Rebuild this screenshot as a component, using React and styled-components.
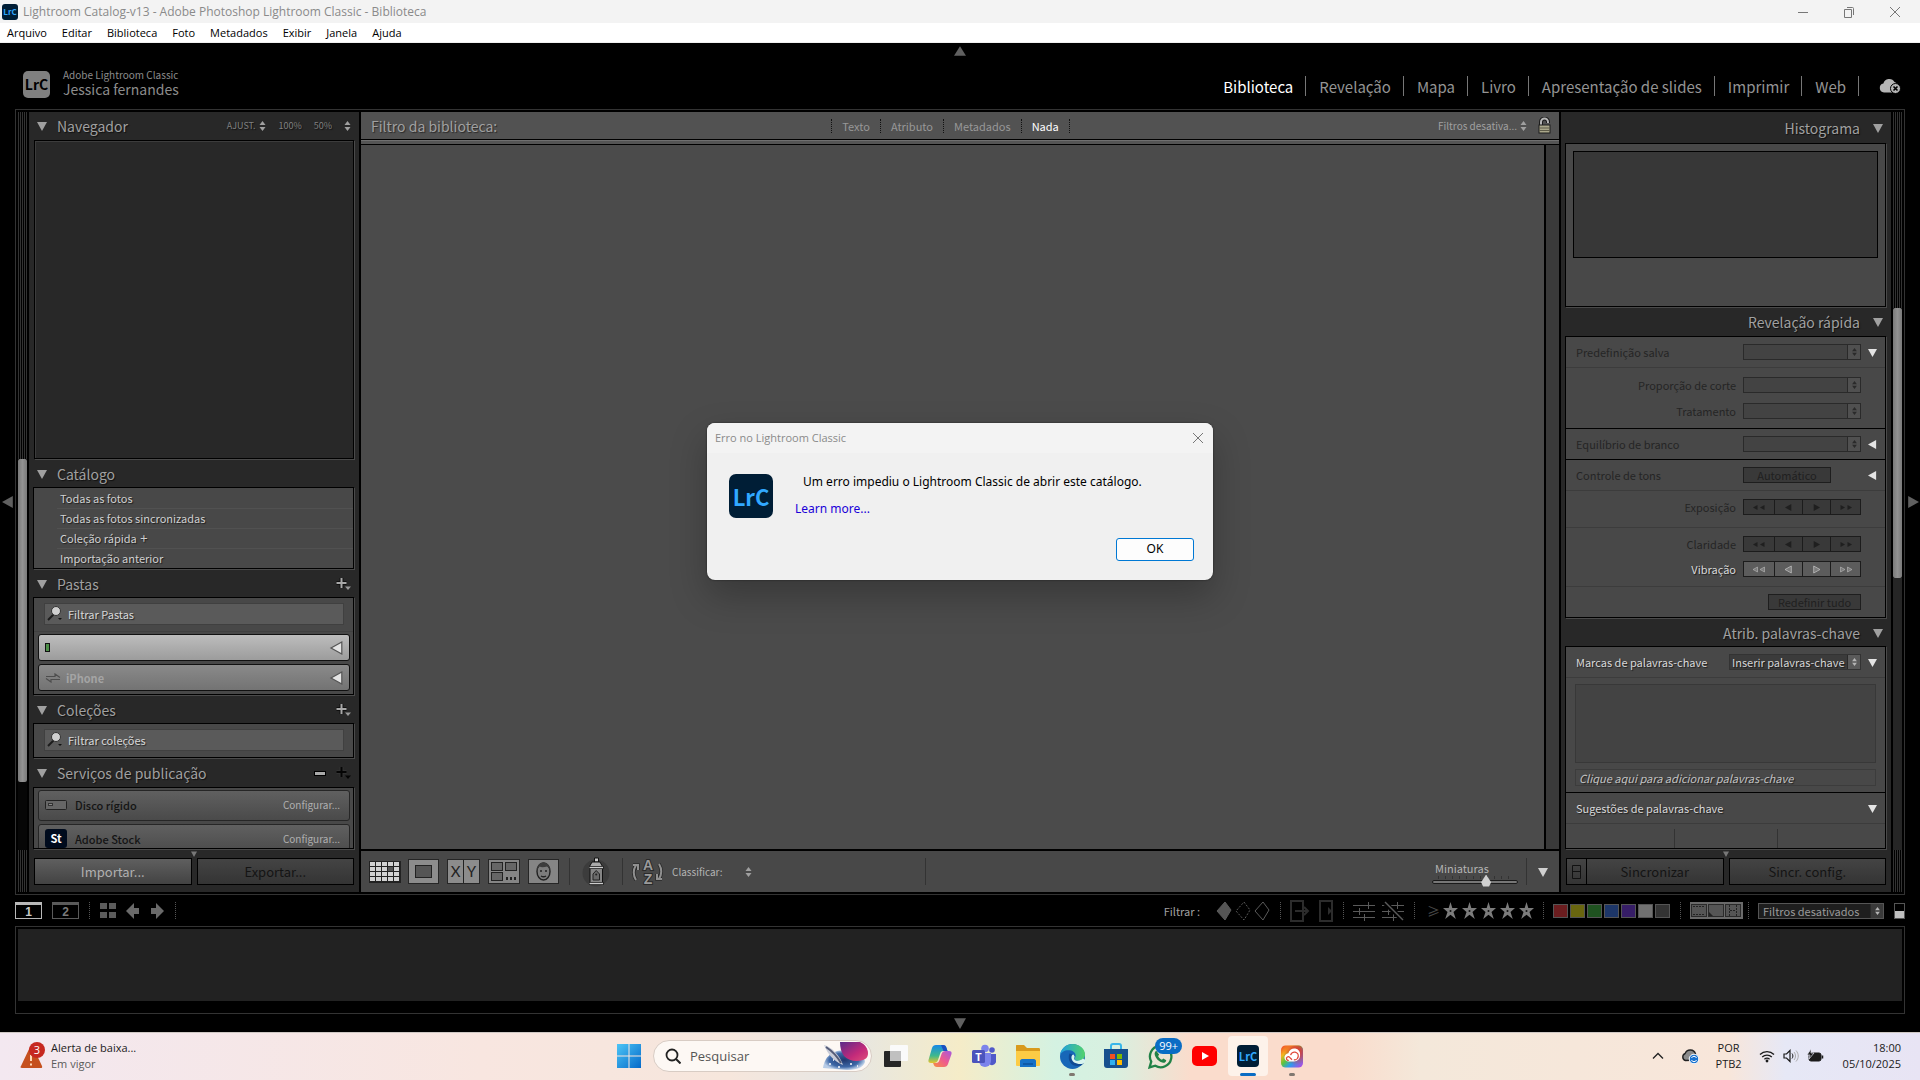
import React, { useId } from "react";
import styled, { createGlobalStyle } from "styled-components";

const uiFont = `"Noto Sans CJK SC", "Open Sans", sans-serif`;
const winFont = `"Open Sans", "Noto Sans", sans-serif`;

const modules = [
  "Biblioteca",
  "Revelação",
  "Mapa",
  "Livro",
  "Apresentação de slides",
  "Imprimir",
  "Web",
];
const menus = [
  "Arquivo",
  "Editar",
  "Biblioteca",
  "Foto",
  "Metadados",
  "Exibir",
  "Janela",
  "Ajuda",
];
const swatches = [
  "#6b1d1f",
  "#69660f",
  "#1f5220",
  "#1d3668",
  "#361d66",
  "#717171",
  "#333333",
];

/* ---------- icons ---------- */

const Tri = ({ dir = "down", size = 9, color = "#a0a0a0", stroke }) => {
  const points = {
    down: "0,1 10,1 5,10",
    up: "0,9 10,9 5,1",
    left: "9,0 9,10 0,5",
    right: "1,0 1,10 10,5",
  };
  return (
    <svg width={size} height={size} viewBox="0 0 10 10" overflow="visible">
      <polygon points={points[dir]} fill={color} stroke={stroke} />
    </svg>
  );
};

const UpDown = ({ color = "#a0a0a0" }) => (
  <svg width="7" height="10" viewBox="0 0 7 10">
    <path d="M3.5 0 6.5 4h-6zM3.5 10 .5 6h6z" fill={color} />
  </svg>
);

const PlusIcon = ({ dark }) => (
  <svg width="15" height="14" viewBox="0 0 15 14">
    <path
      d="M5.500 1v10M.5 6h10"
      stroke={dark ? "#3a3a3a" : "#000"}
      strokeWidth="4"
      opacity=".6"
    />
    <path d="M5.500 1v10M.5 6h10" stroke={dark ? "#050505" : "#a8a8a8"} strokeWidth="2" />
    <path d="M9 9.500h6L12 13z" fill={dark ? "#050505" : "#999"} />
  </svg>
);

const Magnifier = () => (
  <svg width="17" height="16" viewBox="0 0 17 16">
    <path d="M2 14l6-6" stroke="#1c1c1c" strokeWidth="2" />
    <circle cx="10" cy="5" r="4.500" fill="#cfcfcf" stroke="#333" />
    <path d="M12 12h4l-2 2z" fill="#111" />
  </svg>
);

const Padlock = () => (
  <svg width="13" height="18" viewBox="0 0 13 18">
    <path
      d="M3 8V5a3.500 3.500 0 0 1 7 0v1"
      fill="none"
      stroke="#1c1c1c"
      strokeWidth="4"
    />
    <path
      d="M3 8V5a3.500 3.500 0 0 1 7 0v1"
      fill="none"
      stroke="#b5b5b5"
      strokeWidth="2"
    />
    <rect x="1" y="8" width="11" height="8" fill="#aaa78a" stroke="#1c1c1c" />
    <path d="M1 11h11M1 13.500h11" stroke="#5c5a48" />
  </svg>
);

const CloudOff = () => (
  <svg width="22" height="16" viewBox="0 0 22 16">
    <path
      d="M5 14.500a4.500 4.500 0 0 1-.6-8.900A6 6 0 0 1 15.500 4a5 5 0 0 1 3.500 4.500V14.500z"
      fill="#b5b5b5"
    />
    <circle cx="16.500" cy="10.500" r="5" fill="#b5b5b5" stroke="#000" />
    <path d="M14.500 8.500l4 4m0-4l-4 4" stroke="#000" strokeWidth="1.600" />
  </svg>
);

const GridIcon = () => (
  <svg width="32" height="22" viewBox="0 0 32 22">
    <rect width="32" height="22" fill="#222" />
    {[0, 1, 2, 3].map((r) =>
      [0, 1, 2, 3, 4].map((c) => (
        <rect
          key={`${r}${c}`}
          x={1 + c * 6}
          y={1 + r * 5}
          width="5"
          height="4"
          fill={r === 1 && c === 3 ? "#555" : "#d2d2d2"}
        />
      ))
    )}
  </svg>
);

const LoupeIcon = () => (
  <svg width="32" height="26" viewBox="0 0 32 26">
    <rect x=".5" y=".5" width="30" height="24" fill="#8c8c8c" stroke="#262626" />
    <rect x="7.500" y="6.500" width="16" height="12" fill="#555" stroke="#222" />
  </svg>
);

const CompareIcon = () => (
  <svg width="34" height="26" viewBox="0 0 34 26">
    <rect x=".5" y=".5" width="32" height="24" fill="#8c8c8c" stroke="#262626" />
    <path d="M16.500 1v23" stroke="#222" />
    <g fill="#222" fontFamily="Lato" fontSize="15" textAnchor="middle">
      <text x="8.500" y="18">X</text>
      <text x="24.500" y="18">Y</text>
    </g>
  </svg>
);

const SurveyIcon = () => (
  <svg width="33" height="26" viewBox="0 0 33 26">
    <rect x=".5" y=".5" width="31" height="24" fill="#858585" stroke="#262626" />
    <g fill="#666" stroke="#222">
      <rect x="3.500" y="3.500" width="11" height="8" />
      <rect x="17.500" y="3.500" width="11" height="8" />
      <rect x="3.500" y="13.500" width="11" height="8" />
    </g>
    <path d="M18 19.500h10" stroke="#222" strokeWidth="3" strokeDasharray="2 2" />
  </svg>
);

const FaceIcon = () => (
  <svg width="32" height="26" viewBox="0 0 32 26">
    <rect x=".5" y=".5" width="30" height="24" fill="#858585" stroke="#262626" />
    <ellipse
      cx="15.500"
      cy="12.500"
      rx="6.500"
      ry="8.500"
      fill="#7c7c7c"
      stroke="#222"
      strokeWidth="1.400"
    />
    <path
      d="M9 11c0-10 13-10 13 0-1-2-2-3-3-3.500-3 1-6 1-7.500 0C10.500 8 10 9 9 11z"
      fill="#3c3c3c"
    />
    <path
      d="M12 12h2M17 12h2M13 17c1.500 1 3.500 1 5 0"
      stroke="#222"
      fill="none"
      strokeWidth="1.400"
    />
  </svg>
);

const SprayIcon = () => (
  <svg width="28" height="30" viewBox="0 0 28 30">
    <circle cx="14" cy="16" r="13.500" fill="#3c3c3c" />
    <path d="M12.500 1h4v4h-4z" fill="#ccc" stroke="#111" />
    <path d="M10 5h8l2.500 4.500h-13z" fill="#aaa" stroke="#111" />
    <path d="M8 10h12.500v17H8z" fill="#858585" stroke="#111" />
    <path d="M7 10.500h14.500M7 26.500h14.500" stroke="#111" strokeWidth="3" />
    <path d="M7.500 10.500H21M7.500 26.500H21" stroke="#ccc" strokeWidth="1.400" />
    <path d="M11 23v-6l3.200-3.500 3.300 3.500v6z" fill="#6a6a6a" stroke="#222" />
    <circle cx="14.200" cy="17.500" r="1" fill="#222" />
  </svg>
);

const SortIcon = () => (
  <svg width="32" height="28" viewBox="0 0 32 28">
    <g fill="none" stroke="#2a2a2a" strokeWidth="3.600">
      <path d="M4 22C1 17 1 12 4 7M1 7h5v5" />
      <path d="M27 6c3 5 3 10 0 15M30 21h-5v-5" />
    </g>
    <g fill="none" stroke="#909090" strokeWidth="2">
      <path d="M4 22C1 17 1 12 4 7M1 7h5v5" />
      <path d="M27 6c3 5 3 10 0 15M30 21h-5v-5" />
    </g>
    <g
      fill="#9a9a9a"
      stroke="#2a2a2a"
      strokeWidth="2"
      paintOrder="stroke"
      fontFamily="Liberation Sans"
      fontWeight="700"
      fontSize="14"
      textAnchor="middle"
    >
      <text x="16" y="12">A</text>
      <text x="16" y="26">Z</text>
    </g>
  </svg>
);

const HardDisk = () => (
  <svg width="22" height="10" viewBox="0 0 22 10">
    <rect x=".5" y=".5" width="21" height="9" rx="1" fill="#666" stroke="#222" />
    <rect x="3.500" y="3.500" width="4" height="2" fill="#888" stroke="#333" />
  </svg>
);

const SyncArrows = () => (
  <svg width="16" height="10" viewBox="0 0 16 10">
    <path
      d="M1 3.500h9V1l5 3.500M15 6.500H6V9L1 5.500"
      fill="none"
      stroke="#4d4d4d"
      strokeWidth="1.200"
    />
  </svg>
);

const Flag = ({ fill = "none", dashed }) => (
  <svg width="16" height="20" viewBox="0 0 16 20">
    <path
      d="M9 1l6 8-6 10-8-9z"
      fill={fill}
      stroke="#5a5a5a"
      strokeDasharray={dashed ? "2 1.500" : "none"}
    />
  </svg>
);

const CopyIcon = ({ small }) => (
  <svg width={small ? 14 : 20} height="22" viewBox={small ? "0 0 14 22" : "0 0 20 22"}>
    <rect
      x="1"
      y="1"
      width="12"
      height="20"
      fill="none"
      stroke="#2c2c2c"
      strokeWidth="2"
    />
    {small ? (
      <path d="M9 7l4 4-4 4z" fill="#2c2c2c" />
    ) : (
      <path d="M5 11h13M14 7l4 4-4 4" fill="none" stroke="#2c2c2c" strokeWidth="2" />
    )}
  </svg>
);

const Adjust = ({ off }) => (
  <svg width="22" height="20" viewBox="0 0 22 20">
    <path
      d="M0 4.500h22M0 10.500h22M0 16.500h22M15.500 1v7M6.500 7v7M11.500 13v7"
      stroke="#5a5a5a"
      fill="none"
    />
    {off && <path d="M1 0l20 19" stroke="#000" strokeWidth="5" />}
    {off && <path d="M3 1l18 18" stroke="#5a5a5a" strokeWidth="1.400" />}
  </svg>
);

const Star = () => (
  <svg width="15" height="17" viewBox="0 0 15 17">
    <path
      d="M7.500 0l1.800 6H15l-4.500 4 2.300 7-5.300-4.300L2.200 17l2.300-7L0 6h5.700z"
      fill="#7c7c7c"
    />
    <circle cx="7.500" cy="9" r="1" fill="#111" />
  </svg>
);

const Film = ({ kind }) => (
  <svg width="17" height="13" viewBox="0 0 17 13">
    <rect x=".5" y=".5" width="15" height="12" fill="#555" stroke="#2a2a2a" />
    {kind === 0 && (
      <path d="M2 2.500h12M2 10.500h12" stroke="#222" strokeDasharray="2 1" />
    )}
    {kind === 1 && <path d="M1 8l4 4H1z" fill="#222" />}
    {kind === 2 && (
      <path d="M4.500 1v11M11.500 1v11M5 6.500h6" stroke="#222" strokeDasharray="2 1" />
    )}
  </svg>
);

const WinControl = ({ d }) => (
  <svg width="12" height="12" viewBox="0 0 12 12">
    <path d={d} stroke="#777" fill="none" />
  </svg>
);

/* ---------- taskbar icons ---------- */

const StartIcon = () => (
  <svg width="24" height="24" viewBox="0 0 24 24">
    <defs>
      <linearGradient id="start" x1="0" y1="0" x2="1" y2="1">
        <stop offset="0" stopColor="#4cc5f6" />
        <stop offset="1" stopColor="#0569c9" />
      </linearGradient>
    </defs>
    <path
      d="M0 0h11.500v11.500H0zM12.500 0H24v11.500H12.500zM0 12.500h11.500V24H0zM12.500 12.500H24V24H12.500z"
      fill="url(#start)"
    />
  </svg>
);

const SearchArt = () => (
  <svg width="48" height="28" viewBox="0 0 48 28">
    <defs>
      <linearGradient id="planet" x1="0" y1="0" x2="1" y2="1">
        <stop offset="0" stopColor="#5a2a8a" />
        <stop offset=".6" stopColor="#c32a7a" />
        <stop offset="1" stopColor="#e0507a" />
      </linearGradient>
      <radialGradient id="sky">
        <stop offset="0" stopColor="#20386e" />
        <stop offset=".7" stopColor="#3d67a6" />
        <stop offset="1" stopColor="#b8cce6" />
      </radialGradient>
    </defs>
    <path d="M2 26C4 12 14 8 26 8s18 8 18 12c-2 6-10 8-18 8z" fill="url(#sky)" />
    <path
      d="M19 0h20c5 2 8 7 8 11 0 4-2 6-5 7-7 2-14 1-19-4-3-4-4-9-4-14z"
      fill="url(#planet)"
    />
    <path d="M3 3c8 2 16 11 19 20C14 20 7 13 3 3z" fill="#c9ccd8" />
    <path d="M5 5c6 4 11 9 15 16" stroke="#555c78" strokeWidth="2" fill="none" />
    <path d="M8 22h2M17 25h2M29 22h2M36 24h1M12 18h1" stroke="#fff" strokeWidth="1.500" />
  </svg>
);

const TaskView = () => (
  <svg width="24" height="24" viewBox="0 0 24 24">
    <rect x="6" y="1" width="18" height="16" rx="1" fill="#fafafa" />
    <rect x="0" y="7" width="17" height="16" rx="1" fill="#262626" />
    <rect x="6" y="7" width="11" height="10" fill="#c0c0c0" />
  </svg>
);

const Copilot = () => (
  <svg width="24" height="24" viewBox="0 0 24 24">
    <defs>
      <linearGradient id="cop1" x1="0" y1="0" x2="0" y2="1">
        <stop offset="0" stopColor="#1688e8" />
        <stop offset=".6" stopColor="#3fb98c" />
        <stop offset="1" stopColor="#e8c52d" />
      </linearGradient>
      <linearGradient id="cop2" x1="1" y1="0" x2="0" y2="1">
        <stop offset="0" stopColor="#a45ae0" />
        <stop offset=".5" stopColor="#ee5a8f" />
        <stop offset="1" stopColor="#f7913e" />
      </linearGradient>
    </defs>
    <path
      d="M8 1h7c2 0 3 1 3.500 3l1 3h-4c-2 0-3 1-3.500 3l-2 6c-.6 2-2 3-4 3H3c-2 0-3-1-2.500-3L4 4c.6-2 2-3 4-3z"
      fill="url(#cop1)"
    />
    <path
      d="M16 23H9c-2 0-3-1-3.500-3l-.5-1h3c2 0 3-1 3.500-3l2-6c.6-2 2-3 4-3h3.500c2 0 3 1 2.500 3l-3.500 10c-.6 2-2 3-4 3z"
      fill="url(#cop2)"
    />
    <path d="M13 1h2c2 0 3 1 3.500 3l1 3h-4z" fill="#1c4fc0" />
  </svg>
);

const Teams = () => (
  <svg width="24" height="24" viewBox="0 0 24 24">
    <circle cx="20" cy="6" r="2.800" fill="#5059c9" />
    <circle cx="13" cy="4.500" r="3.800" fill="#7b83eb" />
    <path d="M16 10h8v6a4 4 0 0 1-8 2z" fill="#5059c9" />
    <path d="M7 9h12v8a6 6 0 0 1-12 0z" fill="#7b83eb" />
    <rect y="6" width="13" height="13" rx="1.500" fill="#4b53bc" />
    <text
      x="6.500"
      y="16.500"
      textAnchor="middle"
      fill="#fff"
      fontSize="11"
      fontWeight="700"
      fontFamily="Open Sans"
    >
      T
    </text>
  </svg>
);

const Explorer = () => (
  <svg width="24" height="24" viewBox="0 0 24 24">
    <path d="M0 2c0-1 0-1 1-1h7l3 3h12c1 0 1 1 1 2v5H0z" fill="#d99a1c" />
    <path d="M0 7h24v14c0 1-1 1-1 1H1c-1 0-1-1-1-1z" fill="#fccb45" />
    <path d="M4 23v-6c0-1 1-2 2-2h12c1 0 2 1 2 2v6z" fill="#1672c8" />
    <path d="M7 19h10v2H7z" fill="#0e5aa8" />
  </svg>
);

const Edge = () => (
  <svg width="25" height="25" viewBox="0 0 24 24">
    <defs>
      <linearGradient id="edge1" x1="0" y1="0" x2="1" y2="0">
        <stop offset="0" stopColor="#1f9fe0" />
        <stop offset="1" stopColor="#52d36b" />
      </linearGradient>
    </defs>
    <circle cx="12" cy="12" r="12" fill="#1767b8" />
    <path
      d="M0 11C1 4 6 0 12 0c7 0 12 5 12 10 0 4-3 6-6 6-3 0-4-1-4-2s1-1 1-3c0-3-3-5-7-5-4 0-7 2-8 5z"
      fill="url(#edge1)"
    />
    <path d="M9 9c-2 6 1 12 8 12 3 0 5-1 6-3-5 2-12 0-12-5 0-2 1-3 1-3z" fill="#0f4a94" />
    <path
      d="M14 12c0 1-1 2 0 3 2 2 6 1 8-1l2 1v2l-2 2c-5 1-11-1-11-6 0-2 1-3 2-3z"
      fill="#d8f4ee"
    />
  </svg>
);

const Store = () => (
  <svg width="24" height="26" viewBox="0 0 24 26">
    <path
      d="M7 7V3c0-1 1-2 2-2h6c1 0 2 1 2 2v4"
      fill="none"
      stroke="#38b6ea"
      strokeWidth="2"
    />
    <path d="M0 6h24v16c0 2-1 3-3 3H3c-2 0-3-1-3-3z" fill="#17508e" />
    <path d="M6 11h5v5H6z" fill="#f25022" />
    <path d="M13 11h5v5h-5z" fill="#7fba00" />
    <path d="M6 17h5v5H6z" fill="#2fb0ef" />
    <path d="M13 17h5v5h-5z" fill="#ffb900" />
  </svg>
);

const WhatsApp = () => (
  <svg width="25" height="25" viewBox="0 0 24 24">
    <path
      d="M1.500 22.500l1.600-5.600A10.300 10.300 0 1 1 7 20.900z"
      fill="none"
      stroke="#218247"
      strokeWidth="2.200"
    />
    <path
      d="M8 6.500c-1 .5-2 2-1.500 4 1 3.500 4 6.500 8 7.500 1.500.3 3-1 3-2.500l-2.800-1.600-1.300 1.300c-1.600-.6-3-2-3.700-3.700l1-1.200z"
      fill="#218247"
    />
  </svg>
);

const YouTube = () => (
  <svg width="25" height="20" viewBox="0 0 25 20">
    <rect width="25" height="20" rx="5" fill="#f00" />
    <path d="M10 6v8l7-4z" fill="#fff" />
  </svg>
);

const CreativeCloud = () => (
  <svg width="22" height="23" viewBox="0 0 24 24">
    <defs>
      <linearGradient id="cc" x1="0" y1="0" x2="1" y2="1">
        <stop offset="0" stopColor="#f0342a" />
        <stop offset=".25" stopColor="#f7b51e" />
        <stop offset=".45" stopColor="#5cc43e" />
        <stop offset=".65" stopColor="#2a9df0" />
        <stop offset="1" stopColor="#c83ae0" />
      </linearGradient>
      <radialGradient id="cc2" cx=".7" cy=".3" r=".6">
        <stop offset="0" stopColor="#e63232" />
        <stop offset=".4" stopColor="#e63232" stopOpacity=".8" />
        <stop offset="1" stopColor="#e63232" stopOpacity="0" />
      </radialGradient>
    </defs>
    <rect width="24" height="24" rx="5" fill="url(#cc)" />
    <rect width="24" height="24" rx="5" fill="url(#cc2)" />
    <path
      d="M8.500 17.500a4.500 4.500 0 0 1-.5-9 6.500 6.500 0 0 1 12.800 2.500 6.500 6.500 0 0 1-6.500 6.500z"
      fill="#fff"
    />
    <path
      d="M12 15.500l-2.500-2.500a2 2 0 1 0-1 3.200M10.500 10.500a4.200 4.200 0 1 1 3.500 5"
      fill="none"
      stroke="#e0483a"
      strokeWidth="1.400"
    />
  </svg>
);

const WarningIcon = () => (
  <svg width="26" height="28" viewBox="0 0 26 28">
    <path
      d="M10 5c1-1.500 2-1.500 3 0l9 19c.5 1.500 0 2-1 2H2c-1.500 0-2-1-1-2z"
      fill="#c5501e"
    />
    <path d="M11 13v6M11 21.500v2" stroke="#ffd9b8" strokeWidth="2" />
    <circle cx="17" cy="8" r="8" fill="#c62820" />
    <text
      x="17"
      y="12"
      textAnchor="middle"
      fill="#fff"
      fontSize="11"
      fontFamily="Open Sans"
    >
      3
    </text>
  </svg>
);

const CloudSync = () => (
  <svg width="18" height="16" viewBox="0 0 18 16">
    <path
      d="M4.500 12.500a3.700 3.700 0 0 1-.4-7A5.500 5.500 0 0 1 14.500 6v6z"
      fill="#8c8c8c"
      stroke="#222"
      strokeWidth="1.400"
    />
    <circle cx="13" cy="11" r="4.800" fill="#1a73d0" stroke="#fff" />
    <path
      d="M10.500 10a2.700 2.700 0 0 1 5 0M15.500 12a2.700 2.700 0 0 1-5 0"
      stroke="#fff"
      fill="none"
    />
  </svg>
);

const Wifi = () => (
  <svg width="16" height="14" viewBox="0 0 16 14">
    <g fill="none" stroke="#1b1b1b" strokeWidth="1.300">
      <path d="M1 5.500a10 10 0 0 1 14 0M3.200 8a7 7 0 0 1 9.600 0M5.400 10.300a4 4 0 0 1 5.200 0" />
    </g>
    <circle cx="8" cy="12" r="1.400" fill="#1b1b1b" />
  </svg>
);

const Speaker = () => (
  <svg width="16" height="14" viewBox="0 0 16 14">
    <path
      d="M1 5h2.500L7 1.500v11L3.500 9H1z"
      fill="none"
      stroke="#1b1b1b"
      strokeWidth="1.200"
    />
    <path d="M9 4.500c1.200 1.500 1.200 3.500 0 5" fill="none" stroke="#1b1b1b" />
    <path d="M11 3c2 2.500 2 5.500 0 8M13 1.500c3 3.500 3 7.500 0 11" fill="none" stroke="#aaa" />
  </svg>
);

const Battery = () => (
  <svg width="17" height="14" viewBox="0 0 17 14">
    <rect x="2" y="4" width="12" height="8" rx="2" fill="#1b1b1b" stroke="#1b1b1b" />
    <path d="M15.500 6.500v3" stroke="#1b1b1b" strokeWidth="1.500" />
    <path
      d="M4 0L0 6h3l-1 4 5-6H4z"
      fill="#1b1b1b"
      stroke="#e6e8f6"
      strokeWidth=".7"
    />
  </svg>
);

/* ---------- shared parts ---------- */

const Section = ({ title, height, extra, right, children }) => (
  <>
    <SectionHead $height={height} $right={right}>
      <Tri size={10} />
      <h2>{title}</h2>
      {extra}
    </SectionHead>
    {children}
  </>
);

const Dropdown = ({ label, value = "", disabled, width, muted }) => (
  <DropWrap $width={width} $disabled={disabled} $muted={muted}>
    <select aria-label={label} disabled={disabled} defaultValue={value}>
      <option value={value}>{value}</option>
    </select>
    <span>
      <UpDown color={disabled ? "#2a2a2a" : "#b5b5b5"} />
    </span>
  </DropWrap>
);

const Stepper = ({ label, disabled }) => {
  const color = disabled ? "#1f1f1f" : "#7c7c7c";
  const stroke = disabled ? "none" : "#c8c8c8";
  return (
    <StepWrap $disabled={disabled}>
      {["left", "left", "right", "right"].map((dir, i) => (
        <button key={i} disabled={disabled} aria-label={`${label} ${i + 1}`}>
          <Tri dir={dir} size={i % 3 ? 7 : 5} color={color} stroke={stroke} />
          {i % 3 === 0 && <Tri dir={dir} size={5} color={color} stroke={stroke} />}
        </button>
      ))}
    </StepWrap>
  );
};

const SearchBox = ({ label }) => {
  const id = useId();
  return (
    <SearchWrap>
      <label htmlFor={id} aria-label={label}>
        <Magnifier />
      </label>
      <input id={id} type="text" placeholder={label} />
    </SearchWrap>
  );
};

const LeftPanel = () => (
  <Panel>
    <Scroll>
      <Section
        title="Navegador"
        height={28}
        extra={
          <ZoomLevels>
            <button>
              AJUST. <UpDown />
            </button>
            <button>100%</button>
            <button>50%</button>
            <button aria-label="Zoom">
              <UpDown />
            </button>
          </ZoomLevels>
        }
      >
        <Preview />
      </Section>
      <Section title="Catálogo">
        <Box>
          <Catalog>
            <li>Todas as fotos</li>
            <li>Todas as fotos sincronizadas</li>
            <li>
              Coleção rápida <span>+</span>
            </li>
            <li>Importação anterior</li>
          </Catalog>
        </Box>
      </Section>
      <Section
        title="Pastas"
        extra={
          <HeadTools>
            <button aria-label="Nova pasta">
              <PlusIcon />
            </button>
          </HeadTools>
        }
      >
        <Box>
          <SearchBox label="Filtrar Pastas" />
          <Volumes>
            <Volume>
              <Led />
              <Tri dir="left" size={12} color="#e4e4e4" stroke="#555" />
            </Volume>
            <Volume $dim>
              <SyncArrows />
              <span>iPhone</span>
              <Tri dir="left" size={12} color="#e4e4e4" stroke="#555" />
            </Volume>
          </Volumes>
        </Box>
      </Section>
      <Section
        title="Coleções"
        extra={
          <HeadTools>
            <button aria-label="Nova coleção">
              <PlusIcon />
            </button>
          </HeadTools>
        }
      >
        <Box>
          <SearchBox label="Filtrar coleções" />
        </Box>
      </Section>
      <Section
        title="Serviços de publicação"
        height={28}
        extra={
          <HeadTools>
            <button aria-label="Remover serviço">
              <svg width="12" height="5" viewBox="0 0 12 5">
                <rect x=".5" y=".5" width="11" height="4" fill="#aaa" stroke="#000" />
              </svg>
            </button>
            <button aria-label="Novo serviço">
              <PlusIcon dark />
            </button>
          </HeadTools>
        }
      >
        <Box $fill>
          <Service>
            <HardDisk />
            <span>Disco rígido</span>
            <button>Configurar...</button>
          </Service>
          <Service>
            <Stock>St</Stock>
            <span>Adobe Stock</span>
            <button>Configurar...</button>
          </Service>
        </Box>
      </Section>
    </Scroll>
    <PanelFoot>
      <Tri size={6} color="#777" />
      <div>
        <BigButton $lit>Importar...</BigButton>
        <BigButton disabled>Exportar...</BigButton>
      </div>
    </PanelFoot>
  </Panel>
);

const RightPanel = () => (
  <Panel>
    <Scroll>
      <Section title="Histograma" height={31} right>
        <Box>
          <Histogram />
        </Box>
      </Section>
      <Section title="Revelação rápida" height={28} right>
        <Box>
          <Row $height={31} $line="soft" $start>
            <span>Predefinição salva</span>
            <Dropdown label="Predefinição salva" disabled width={118} />
            <Tri color="#e4e4e4" />
          </Row>
          <Row $height={35} $lift={2}>
            <span>Proporção de corte</span>
            <Dropdown label="Proporção de corte" disabled width={118} />
            <i />
          </Row>
          <Row $height={26} $line="hard" $lift={10}>
            <span>Tratamento</span>
            <Dropdown label="Tratamento" disabled width={118} />
            <i />
          </Row>
          <Row $height={31} $line="hard" $start>
            <span>Equilíbrio de branco</span>
            <Dropdown label="Equilíbrio de branco" disabled width={118} />
            <Tri dir="left" color="#e4e4e4" />
          </Row>
          <Row $height={31} $line="soft" $start>
            <span>Controle de tons</span>
            <AutoCell>
              <SmallButton disabled $width={88}>
                Automático
              </SmallButton>
            </AutoCell>
            <Tri dir="left" color="#e4e4e4" />
          </Row>
          <Row $height={37} $line="soft" $lift={4}>
            <span>Exposição</span>
            <Stepper label="Exposição" disabled />
            <i />
          </Row>
          <Row $height={34} $lift={2}>
            <span>Claridade</span>
            <Stepper label="Claridade" disabled />
            <i />
          </Row>
          <Row $height={25} $line="soft" $lit $lift={10}>
            <span>Vibração</span>
            <Stepper label="Vibração" />
            <i />
          </Row>
          <Row $height={30}>
            <span />
            <SmallButton disabled $width={93}>
              Redefinir tudo
            </SmallButton>
            <i />
          </Row>
        </Box>
      </Section>
      <Section title="Atrib. palavras-chave" right>
        <Box $fill>
          <Row $height={31} $line="soft" $start $lit>
            <span>Marcas de palavras-chave</span>
            <Dropdown
              label="Marcas de palavras-chave"
              value="Inserir palavras-chave"
              width={132}
            />
            <Tri color="#e4e4e4" />
          </Row>
          <Keywords>
            <textarea aria-label="Palavras-chave" />
            <input
              type="text"
              aria-label="Adicionar palavras-chave"
              placeholder="Clique aqui para adicionar palavras-chave"
            />
          </Keywords>
          <Row $height={31} $line="soft" $start $lit>
            <span>Sugestões de palavras-chave</span>
            <Tri color="#e4e4e4" />
          </Row>
          <Suggestions>
            <i />
            <i />
            <i />
          </Suggestions>
        </Box>
      </Section>
    </Scroll>
    <PanelFoot>
      <Tri size={6} color="#777" />
      <div>
        <SyncGroup>
          <button disabled aria-label="Sincronização automática">
            <svg width="9" height="14" viewBox="0 0 9 14">
              <path d="M.5.5h8v13h-8zM.5 6.500h8" fill="none" stroke="#111" />
            </svg>
          </button>
          <BigButton disabled>Sincronizar</BigButton>
        </SyncGroup>
        <BigButton disabled>Sincr. config.</BigButton>
      </div>
    </PanelFoot>
  </Panel>
);

const Center = () => (
  <CenterWrap>
    <FilterBar>
      <h2>Filtro da biblioteca:</h2>
      <FilterTabs>
        <button>Texto</button>
        <button>Atributo</button>
        <button>Metadados</button>
        <button className="active">Nada</button>
      </FilterTabs>
      <FilterPreset>
        <button>
          Filtros desativa... <UpDown />
        </button>
        <button aria-label="Bloquear filtros">
          <Padlock />
        </button>
      </FilterPreset>
    </FilterBar>
    <FilterEdge />
    <Canvas>
      <div />
      <i />
    </Canvas>
    <Toolbar>
      <ViewButtons>
        <button aria-label="Grade">
          <GridIcon />
        </button>
        <button aria-label="Lupa">
          <LoupeIcon />
        </button>
        <button aria-label="Comparar">
          <CompareIcon />
        </button>
        <button aria-label="Pesquisa">
          <SurveyIcon />
        </button>
        <button aria-label="Pessoas">
          <FaceIcon />
        </button>
      </ViewButtons>
      <Divider />
      <ToolButton aria-label="Pintor">
        <SprayIcon />
      </ToolButton>
      <Divider />
      <SortTools>
        <button aria-label="Direção da classificação">
          <SortIcon />
        </button>
        <button>
          Classificar: <UpDown />
        </button>
      </SortTools>
      <Divider />
      <Thumbs>
        <label htmlFor="thumbs">Miniaturas</label>
        <input id="thumbs" type="range" min="0" max="100" defaultValue="65" />
      </Thumbs>
      <Divider />
      <ToolButton aria-label="Opções da barra" $narrow>
        <Tri size={10} color="#d0d0d0" />
      </ToolButton>
    </Toolbar>
  </CenterWrap>
);

const FilmBar = () => (
  <FilmTools>
    <Screen $on>1</Screen>
    <Screen>2</Screen>
    <Dots />
    <NavButtons>
      <button aria-label="Grade">
        <svg width="16" height="16" viewBox="0 0 16 16">
          <path d="M0 0h7v6H0zM9 0h7v6H9zM0 9h7v6H0zM9 9h7v6H9z" fill="#5c5c5c" />
        </svg>
      </button>
      <button aria-label="Voltar">
        <svg width="14" height="16" viewBox="0 0 14 16">
          <path d="M0 8l8-8v5h5v6H8v5z" fill="#6a6a6a" />
        </svg>
      </button>
      <button aria-label="Avançar">
        <svg width="14" height="16" viewBox="0 0 14 16">
          <path d="M14 8L6 0v5H1v6h5v5z" fill="#6a6a6a" />
        </svg>
      </button>
    </NavButtons>
    <Dots />
    <Spring />
    <FilterLabel>Filtrar :</FilterLabel>
    <Group $gap={3}>
      <Flag fill="#555" />
      <Flag dashed />
      <Flag />
    </Group>
    <Dots />
    <Group $gap={9}>
      <CopyIcon />
      <CopyIcon small />
    </Group>
    <Dots />
    <Group $gap={7}>
      <Adjust />
      <Adjust off />
    </Group>
    <Dots />
    <Stars>
      <span>≥</span>
      {[1, 2, 3, 4, 5].map((n) => (
        <button key={n} aria-label={`${n} estrelas`}>
          <Star />
        </button>
      ))}
    </Stars>
    <Dots />
    <Group $gap={2}>
      {swatches.map((color) => (
        <Swatch key={color} $color={color} aria-label={`Cor ${color}`} />
      ))}
    </Group>
    <Dots />
    <FilmKinds>
      <Film kind={0} />
      <Film kind={1} />
      <Film kind={2} />
    </FilmKinds>
    <Dots />
    <Dropdown label="Filtros" value="Filtros desativados" width={126} muted />
    <Toggle aria-label="Ativar filtros" />
  </FilmTools>
);

const ErrorDialog = () => (
  <Overlay>
    <Dialog role="dialog" aria-labelledby="dlg-title">
      <header>
        <span id="dlg-title">Erro no Lightroom Classic</span>
        <button aria-label="Fechar">
          <WinControl d="M1 1l10 10M11 1L1 11" />
        </button>
      </header>
      <DialogBody>
        <Lrc $size={44}>LrC</Lrc>
        <div>
          <p>Um erro impediu o Lightroom Classic de abrir este catálogo.</p>
          <a href="#more">Learn more...</a>
        </div>
      </DialogBody>
      <footer>
        <button>OK</button>
      </footer>
    </Dialog>
  </Overlay>
);

const Taskbar = () => (
  <TaskWrap>
    <Weather>
      <WarningIcon />
      <span>
        Alerta de baixa...
        <small>Em vigor</small>
      </span>
    </Weather>
    <TaskIcons>
      <TaskButton aria-label="Iniciar">
        <StartIcon />
      </TaskButton>
      <TaskSearch>
        <label htmlFor="task-search" aria-label="Pesquisar">
          <svg width="16" height="16" viewBox="0 0 16 16">
            <circle
              cx="7"
              cy="7"
              r="5.500"
              fill="none"
              stroke="#222"
              strokeWidth="1.800"
            />
            <path d="M11 11l4.500 4.500" stroke="#222" strokeWidth="2" />
          </svg>
        </label>
        <input id="task-search" type="text" placeholder="Pesquisar" />
        <SearchArt />
      </TaskSearch>
      <TaskButton aria-label="Visão de tarefas">
        <TaskView />
      </TaskButton>
      <TaskButton aria-label="Copilot">
        <Copilot />
      </TaskButton>
      <TaskButton aria-label="Teams">
        <Teams />
      </TaskButton>
      <TaskButton aria-label="Explorador">
        <Explorer />
      </TaskButton>
      <TaskButton aria-label="Edge" $running>
        <Edge />
      </TaskButton>
      <TaskButton aria-label="Store">
        <Store />
      </TaskButton>
      <TaskButton aria-label="WhatsApp">
        <WhatsApp />
        <Badge>99+</Badge>
      </TaskButton>
      <TaskButton aria-label="YouTube">
        <YouTube />
      </TaskButton>
      <TaskButton aria-label="Lightroom Classic" $active>
        <Lrc $size={22}>LrC</Lrc>
      </TaskButton>
      <TaskButton aria-label="Creative Cloud" $running>
        <CreativeCloud />
      </TaskButton>
    </TaskIcons>
    <Tray>
      <svg width="12" height="8" viewBox="0 0 12 8">
        <path d="M1 6.500l5-5 5 5" fill="none" stroke="#222" strokeWidth="1.300" />
      </svg>
      <CloudSync />
      <Lang>
        POR
        <br />
        PTB2
      </Lang>
      <Status>
        <Wifi />
        <Speaker />
        <Battery />
      </Status>
      <Clock>
        18:00
        <br />
        05/10/2025
      </Clock>
    </Tray>
  </TaskWrap>
);

const App = () => (
  <>
    <GlobalStyle />
    <Page>
      <TitleBar>
        <Lrc $size={16}>LrC</Lrc>
        <h1>Lightroom Catalog-v13 - Adobe Photoshop Lightroom Classic - Biblioteca</h1>
        <div>
          <button aria-label="Minimizar">
            <WinControl d="M1 6.500h10" />
          </button>
          <button aria-label="Restaurar">
            <WinControl d="M1.500 3.500h7v8h-7zM4 1.500h5.500a1 1 0 0 1 1 1V9" />
          </button>
          <button aria-label="Fechar">
            <WinControl d="M1 1l10 10M11 1L1 11" />
          </button>
        </div>
      </TitleBar>
      <MenuBar>
        {menus.map((m) => (
          <button key={m}>{m}</button>
        ))}
      </MenuBar>
      <Workspace>
        <EdgeArrow>
          <Tri dir="up" size={12} color="#606060" />
        </EdgeArrow>
        <Header>
          <Identity>
            <Lrc $size={27} $grey>
              LrC
            </Lrc>
            <p>
              <small>Adobe Lightroom Classic</small>
              Jessica fernandes
            </p>
          </Identity>
          <Modules>
            {modules.map((m, i) => (
              <button key={m} className={i === 0 ? "active" : null}>
                {m}
              </button>
            ))}
            <CloudOff />
          </Modules>
        </Header>
        <Middle>
          <SideArrow>
            <Tri dir="left" size={12} color="#606060" />
          </SideArrow>
          <Frame>
            <Gutter>
              <Ribs $grow={347} />
              <Thumb $grow={322} />
              <Track $grow={68} />
              <Ribs $grow={42} />
            </Gutter>
            <LeftPanel />
            <Center />
            <RightPanel />
            <Gutter>
              <Ribs $grow={196} />
              <Thumb $grow={269} />
              <Track $grow={272} $grey />
              <Ribs $grow={42} />
            </Gutter>
          </Frame>
          <SideArrow>
            <Tri dir="right" size={12} color="#606060" />
          </SideArrow>
          <ErrorDialog />
        </Middle>
        <FilmBar />
        <Filmstrip>
          <div />
        </Filmstrip>
        <EdgeArrow $bottom>
          <Tri size={12} color="#606060" />
        </EdgeArrow>
      </Workspace>
      <Taskbar />
    </Page>
  </>
);

/* ---------- styles ---------- */

const GlobalStyle = createGlobalStyle`
  * {
    box-sizing: border-box;
  }
  body {
    margin: 0;
    background: #000;
    overflow: hidden;
  }
  h1, h2, p, ul {
    margin: 0;
    padding: 0;
    font-weight: 400;
    list-style: none;
  }
  button, input, select, textarea {
    font: inherit;
    color: inherit;
    border: 0;
    padding: 0;
    margin: 0;
    background: none;
    border-radius: 0;
    text-shadow: inherit;
  }
  svg {
    display: block;
    flex: none;
  }
`;

const Page = styled.div`
  display: flex;
  flex-direction: column;
  height: 100vh;
  font-family: ${uiFont};
  font-size: 11px;
  line-height: 16px;
  color: #a0a0a0;
`;

const Lrc = styled.span`
  display: flex;
  align-items: center;
  justify-content: center;
  flex: none;
  width: ${(p) => p.$size}px;
  height: ${(p) => p.$size}px;
  border-radius: ${(p) => Math.round(p.$size / 6)}px;
  background: ${(p) => (p.$grey ? "#808080" : "#001e36")};
  color: ${(p) => (p.$grey ? "#000" : "#31a8ff")};
  font-family: ${uiFont};
  font-weight: 700;
  font-size: ${(p) => Math.round(p.$size / 2)}px;
  line-height: ${(p) => p.$size}px;
`;

const TitleBar = styled.header`
  display: flex;
  align-items: center;
  gap: 5px;
  height: 23px;
  padding: 0 2px;
  background: #f3f3f3;
  font-family: ${winFont};
  color: #8a8a8a;
  h1 {
    font-size: 12px;
  }
  div {
    display: flex;
    margin-left: auto;
  }
  button {
    width: 46px;
    display: flex;
    justify-content: center;
  }
`;

const MenuBar = styled.nav`
  display: flex;
  gap: 15px;
  height: 20px;
  padding: 0 7px;
  background: #fff;
  border-bottom: 1px solid #f0f0f0;
  font-family: ${winFont};
  font-size: 11px;
  color: #000;
`;

const Workspace = styled.main`
  flex: 1;
  min-height: 0;
  display: flex;
  flex-direction: column;
  background: #000;
`;

const EdgeArrow = styled.div`
  display: flex;
  justify-content: center;
  align-items: center;
  height: ${(p) => (p.$bottom ? 18 : 16)}px;
`;

const Header = styled.div`
  display: flex;
  justify-content: space-between;
  height: 50px;
  padding: 0 19px 0 23px;
`;

const Identity = styled.div`
  display: flex;
  align-items: center;
  gap: 13px;
  p {
    padding-bottom: 4px;
    font-size: 14px;
    line-height: 16px;
    color: #8c8c8c;
  }
  small {
    display: block;
    font-size: 10px;
    line-height: 13px;
  }
`;

const Modules = styled.nav`
  display: flex;
  align-items: center;
  padding-top: 4px;
  font-size: 15px;
  line-height: 22px;
  button {
    height: 20px;
    padding: 0 12px 0 13px;
    border-right: 1px solid #777;
    color: #949494;
  }
  .active {
    color: #fff;
  }
  svg {
    margin-left: 20px;
  }
`;

const Middle = styled.div`
  position: relative;
  flex: 1;
  min-height: 0;
  display: grid;
  grid-template-columns: 15px minmax(0, 1fr) 15px;
`;

const SideArrow = styled.div`
  display: flex;
  align-items: center;
  justify-content: center;
`;

const Frame = styled.div`
  display: grid;
  grid-template-columns: 9px 330px minmax(0, 1fr) 330px 9px;
  column-gap: 2px;
  min-height: 0;
  border: 1px solid #333;
  padding: 2px;
`;

const Gutter = styled.div`
  display: flex;
  flex-direction: column;
`;

const Ribs = styled.div`
  flex: ${(p) => p.$grow} 0 0;
  background: repeating-linear-gradient(90deg, #333 0 1px, #000 1px 2px);
`;

const Thumb = styled.div`
  flex: ${(p) => p.$grow} 0 0;
  border-radius: 2px;
  background: linear-gradient(90deg, #7a7a7a, #929292 50%, #7a7a7a);
`;

const Track = styled.div`
  flex: ${(p) => p.$grow} 0 0;
  background: ${(p) => (p.$grey ? "#262626" : "#060606")};
`;

const Panel = styled.aside`
  display: flex;
  flex-direction: column;
  min-height: 0;
  background: #282828;
  text-shadow: 1px 1px 1px rgba(0, 0, 0, 0.6);
`;

const Scroll = styled.div`
  flex: 1;
  min-height: 0;
  overflow: hidden;
  display: flex;
  flex-direction: column;
`;

const SectionHead = styled.div`
  display: flex;
  flex: none;
  flex-direction: ${(p) => (p.$right ? "row-reverse" : "row")};
  align-items: center;
  gap: ${(p) => (p.$right ? 13 : 10)}px;
  height: ${(p) => p.$height || 27}px;
  padding: 0 8px;
  h2 {
    font-size: 14px;
    line-height: 22px;
    color: #a0a0a0;
    white-space: nowrap;
  }
`;

const ZoomLevels = styled.div`
  display: flex;
  align-items: center;
  gap: 12px;
  margin-left: auto;
  font-size: 9px;
  color: #808080;
  button {
    display: flex;
    align-items: center;
    gap: 4px;
  }
`;

const HeadTools = styled.div`
  display: flex;
  align-items: center;
  gap: 10px;
  margin-left: auto;
  button {
    display: flex;
  }
`;

const Box = styled.div`
  flex: ${(p) => (p.$fill ? "1 0 0" : "none")};
  min-height: 0;
  overflow: hidden;
  margin: 0 5px 1px 4px;
  border: 1px solid #000;
  box-shadow: 1px 1px 0 #4a4a4a;
  background: #484848;
`;

const Preview = styled.div`
  flex: none;
  height: 319px;
  margin: 0 5px 1px;
  border: 1px solid #000;
  box-shadow: 1px 1px 0 #4a4a4a, inset 1px 1px 0 #3c3c3c;
  background: #282828;
`;

const Catalog = styled.ul`
  padding: 0 0 0 23px;
  li {
    height: 20px;
    padding-left: 3px;
    line-height: 20px;
    color: #d0d0d0;
  }
  li + li {
    border-top: 1px solid #515151;
    line-height: 18px;
  }
  span {
    margin-left: 1px;
    font-size: 13px;
  }
`;

const SearchWrap = styled.div`
  display: flex;
  align-items: center;
  gap: 5px;
  height: 22px;
  margin: 5px 9px 6px 10px;
  padding: 0 1px;
  border: 1px solid #404040;
  background: #5a5a5a;
  input {
    flex: 1;
    min-width: 0;
    height: 20px;
    outline: 0;
  }
  input::placeholder {
    color: #d8d8d8;
    opacity: 1;
  }
`;

const Volumes = styled.div`
  display: flex;
  flex-direction: column;
  gap: 3px;
  padding: 2px 3px 3px 4px;
  border-top: 1px solid #404040;
`;

const Volume = styled.div`
  display: flex;
  align-items: center;
  gap: 5px;
  height: 27px;
  padding: 0 6px;
  border: 1px solid #111;
  border-radius: 3px;
  background: ${(p) =>
    p.$dim
      ? "linear-gradient(#8a8a8a, #737373)"
      : "linear-gradient(#bdbdbd, #9c9c9c)"};
  color: #a4a4a4;
  font-weight: 700;
  text-shadow: none;
  svg:last-child {
    margin-left: auto;
  }
`;

const Led = styled.i`
  width: 5px;
  height: 9px;
  border: 1px solid #111;
  background: #4d8f48;
`;

const Service = styled.div`
  display: flex;
  align-items: center;
  gap: 8px;
  height: 31px;
  margin: 2px 3px 3px 4px;
  padding: 0 9px 2px 6px;
  border: 1px solid #262626;
  border-radius: 3px;
  background: linear-gradient(#606060, #4a4a4a);
  text-shadow: none;
  color: #141414;
  font-weight: 500;
  button {
    margin-left: auto;
    font-size: 10px;
    font-weight: 400;
    color: #b0b0b0;
  }
`;

const Stock = styled.b`
  width: 22px;
  height: 19px;
  border-radius: 3px;
  background: #000b1d;
  color: #fff;
  font-size: 11px;
  line-height: 18px;
  text-align: center;
`;

const PanelFoot = styled.div`
  flex: none;
  height: 42px;
  display: flex;
  flex-direction: column;
  align-items: center;
  padding-top: 1px;
  > div {
    display: grid;
    grid-template-columns: 1fr 1fr;
    gap: 5px;
    width: 100%;
    margin-top: 1px;
    padding: 0 5px;
  }
`;

const BigButton = styled.button`
  height: 27px;
  border: 1px solid #000;
  background: ${(p) =>
    p.$lit
      ? "linear-gradient(#5f5f5f, #434343)"
      : "linear-gradient(#444, #343434)"};
  color: ${(p) => (p.$lit ? "#b0b0b0" : "#141414")};
  font-size: 13px;
  text-shadow: none;
`;

const SyncGroup = styled.div`
  display: grid;
  grid-template-columns: 20px 1fr;
  > button:first-child {
    display: grid;
    place-items: center;
    border: 1px solid #000;
    border-right: 0;
    background: linear-gradient(#444, #343434);
  }
`;

const Histogram = styled.div`
  height: 107px;
  margin: 7px 7px 48px;
  border: 1px solid #000;
  background: #373737;
`;

const Row = styled.div`
  display: flex;
  align-items: center;
  justify-content: flex-end;
  gap: 7px;
  height: ${(p) => p.$height}px;
  padding: 0 8px ${(p) => p.$lift || 0}px 10px;
  border-bottom: ${(p) => (p.$line ? "1px solid" : 0)};
  border-color: ${(p) => (p.$line === "hard" ? "#000" : "#3c3c3c")};
  color: ${(p) => (p.$lit ? "#d8d8d8" : "#252525")};
  text-shadow: ${(p) => (p.$lit ? "inherit" : "none")};
  > span {
    margin-right: ${(p) => (p.$start ? "auto" : 0)};
    white-space: nowrap;
  }
  > i,
  > svg {
    flex: none;
    width: 9px;
  }
`;

const AutoCell = styled.div`
  width: 118px;
  display: flex;
`;

const SmallButton = styled.button`
  width: ${(p) => p.$width}px;
  height: 16px;
  border: 1px solid #1e1e1e;
  background: #393939;
  color: #202020;
  line-height: 12px;
`;

const DropWrap = styled.div`
  display: flex;
  flex: none;
  width: ${(p) => p.$width}px;
  height: 16px;
  border: 1px solid ${(p) => (p.$disabled ? "#2a2a2a" : "#333")};
  border-color: ${(p) => p.$muted && "#555"};
  background: ${(p) => (p.$disabled ? "#434343" : "#3b3b3b")};
  background: ${(p) => p.$muted && "#1e1e1e"};
  color: ${(p) => (p.$muted ? "#9a9a9a" : "#d4d4d4")};
  select {
    flex: 1;
    min-width: 0;
    height: 14px;
    padding-left: ${(p) => (p.$muted ? 4 : 2)}px;
    appearance: none;
    line-height: 14px;
    outline: 0;
  }
  span {
    display: grid;
    place-items: center;
    width: 13px;
    border-left: 1px solid #2a2a2a;
    background: ${(p) => (p.$disabled ? "#505050" : "#5a5a5a")};
    background: ${(p) => p.$muted && "#3a3a3a"};
  }
  svg {
    height: 8px;
  }
`;

const StepWrap = styled.div`
  display: grid;
  grid-template-columns: 30px 28px 28px 30px;
  width: 118px;
  height: 16px;
  border: 1px solid #1c1c1c;
  background: ${(p) => (p.$disabled ? "#393939" : "#5c5c5c")};
  button {
    display: flex;
    align-items: center;
    justify-content: center;
    gap: 2px;
  }
  button + button {
    border-left: 1px solid #1c1c1c;
  }
`;

const Keywords = styled.div`
  display: flex;
  flex-direction: column;
  gap: 6px;
  padding: 6px 9px 6px;
  border-bottom: 1px solid #000;
  textarea {
    height: 79px;
    border: 1px solid #383838;
    background: #434343;
    resize: none;
  }
  input {
    height: 17px;
    padding: 0 3px;
    border: 1px solid #3c3c3c;
    font-style: italic;
  }
  input::placeholder {
    color: #c4c4c4;
    opacity: 1;
  }
`;

const Suggestions = styled.div`
  display: grid;
  grid-template-columns: repeat(3, 1fr);
  height: 26px;
  padding: 5px 5px 0;
  i + i {
    border-left: 1px solid #333;
  }
`;

const CenterWrap = styled.section`
  display: flex;
  flex-direction: column;
  min-height: 0;
`;

const FilterBar = styled.div`
  display: grid;
  grid-template-columns: 22fr auto 23fr;
  align-items: center;
  flex: none;
  height: 27px;
  padding: 0 8px 0 10px;
  background: #525252;
  h2 {
    font-size: 14px;
    line-height: 20px;
    text-shadow: 1px 1px 1px #2a2a2a;
  }
`;

const FilterTabs = styled.div`
  display: flex;
  justify-content: center;
  line-height: 14px;
  button {
    height: 14px;
    padding: 0 10px;
    border-right: 1px dotted #111;
    color: #989898;
  }
  button:first-child {
    border-left: 1px dotted #111;
  }
  .active {
    color: #fff;
  }
`;

const FilterPreset = styled.div`
  display: flex;
  align-items: center;
  justify-content: flex-end;
  gap: 11px;
  font-size: 10px;
  button {
    display: flex;
    align-items: center;
    gap: 3px;
  }
`;

const FilterEdge = styled.div`
  flex: none;
  height: 6px;
  border: 1px solid #000;
  border-width: 1px 0;
  background: linear-gradient(#707070 1px, #555 1px);
`;

const Canvas = styled.div`
  flex: 1;
  display: grid;
  grid-template-columns: 1fr 13px;
  gap: 2px;
  background: #000;
  border-bottom: 2px solid #000;
  div {
    background: #4b4b4b;
  }
  i {
    background: #3a3a3a;
  }
`;

const Toolbar = styled.div`
  display: flex;
  align-items: center;
  flex: none;
  height: 41px;
  padding: 0 0 0 8px;
  background: #484848;
  button {
    display: flex;
    align-items: center;
  }
`;

const ViewButtons = styled.div`
  display: flex;
  align-items: center;
  gap: 7px;
  margin-right: 9px;
`;

const Divider = styled.i`
  width: 1px;
  height: 27px;
  background: #333;
`;

const ToolButton = styled.button`
  width: ${(p) => (p.$narrow ? 32 : 52)}px;
  justify-content: center;
`;

const SortTools = styled.div`
  display: flex;
  align-items: center;
  flex: 0 1 302px;
  gap: 8px;
  padding-left: 9px;
  color: #b4b4b4;
  font-size: 10px;
  button {
    gap: 22px;
  }
`;

const Thumbs = styled.div`
  display: flex;
  flex-direction: column;
  width: 86px;
  margin: 0 8px 0 auto;
  padding-top: 8px;
  label {
    padding-left: 3px;
    line-height: 12px;
    color: #b4b4b4;
  }
  input {
    appearance: none;
    width: 86px;
    height: 16px;
    background: repeating-linear-gradient(90deg, #333 0 1px, transparent 1px 7px)
      6px 2px / 75px 3px no-repeat;
  }
  input::-webkit-slider-runnable-track {
    height: 4px;
    border: 1px solid #1a1a1a;
    border-radius: 2px;
    background: #777;
  }
  input::-webkit-slider-thumb {
    appearance: none;
    width: 10px;
    height: 12px;
    margin-top: -6px;
    background: #d0d0d0;
    clip-path: polygon(50% 0, 100% 65%, 80% 100%, 20% 100%, 0 65%);
  }
`;

const FilmTools = styled.div`
  display: flex;
  align-items: center;
  flex: none;
  height: 31px;
  padding: 0 15px;
`;

const Screen = styled.button`
  width: 27px;
  height: 17px;
  margin-right: 10px;
  border: 1px solid ${(p) => (p.$on ? "#b8b8b8" : "#5a5a5a")};
  border-top-width: 3px;
  color: ${(p) => (p.$on ? "#c8c8c8" : "#7a7a7a")};
  font-family: "Liberation Sans", sans-serif;
  font-size: 12px;
  font-weight: 700;
  line-height: 12px;
`;

const Dots = styled.i`
  flex: none;
  height: 17px;
  margin: 0 9px 0 0;
  border-left: 1px dotted #555;
`;

const NavButtons = styled.div`
  display: flex;
  gap: 10px;
  margin: 0 11px 0 1px;
`;

const Spring = styled.div`
  flex: 1;
`;

const FilterLabel = styled.span`
  margin-right: 16px;
`;

const Group = styled.div`
  display: flex;
  align-items: center;
  gap: ${(p) => p.$gap}px;
  margin-right: 10px;
`;

const Stars = styled.div`
  display: flex;
  align-items: center;
  gap: 4px;
  margin-right: 9px;
  span {
    width: 12px;
    margin-left: 3px;
    font-size: 13px;
    color: #4a4a4a;
  }
  button {
    display: flex;
  }
`;

const Swatch = styled.button`
  width: 15px;
  height: 14px;
  border: 1px solid #555;
  background: ${(p) => p.$color};
`;

const FilmKinds = styled.div`
  display: flex;
  align-items: center;
  height: 17px;
  margin-right: 5px;
  padding: 0 1px;
  background: #6a6a6a;
`;

const Toggle = styled.button`
  width: 11px;
  height: 16px;
  margin-left: 10px;
  border: 1px solid #555;
  background: linear-gradient(#000 50%, #c0c0c0 50%);
`;

const Filmstrip = styled.div`
  flex: none;
  height: 88px;
  margin: 0 15px;
  padding: 2px;
  border: 1px solid #333;
  div {
    height: 72px;
    background: #222;
  }
`;

const Overlay = styled.div`
  position: absolute;
  inset: 0;
  display: grid;
  place-items: center;
  padding-bottom: 2px;
`;

const Dialog = styled.div`
  width: 506px;
  border-radius: 8px;
  overflow: hidden;
  background: #f0f0f0;
  box-shadow: 0 16px 36px rgba(0, 0, 0, 0.25), 0 0 2px rgba(0, 0, 0, 0.6);
  color: #000;
  font-family: "Noto Sans", sans-serif;
  font-size: 12px;
  line-height: 16px;
  header {
    display: flex;
    justify-content: space-between;
    align-items: center;
    height: 30px;
    padding: 0 9px 0 8px;
    background: #f3f3f3;
    color: #8a8a8a;
    font-family: ${winFont};
    font-size: 11px;
  }
  footer {
    display: flex;
    justify-content: flex-end;
    height: 42px;
    padding: 0 19px 19px 0;
  }
  footer button {
    width: 78px;
    border: 1px solid #0078d4;
    border-radius: 3px;
    background: #fdfdfd;
  }
`;

const DialogBody = styled.div`
  display: flex;
  gap: 22px;
  height: 85px;
  padding: 21px 22px;
  p {
    padding-left: 8px;
  }
  a {
    display: block;
    margin-top: 11px;
    color: #1a00d8;
    text-decoration: none;
  }
`;

const TaskWrap = styled.footer`
  display: grid;
  grid-template-columns: 1fr auto 1fr;
  align-items: center;
  flex: none;
  height: 48px;
  padding: 0 19px 1px 20px;
  border-top: 1px solid #cfc8c4;
  background: linear-gradient(
    90deg,
    #f3e8f0 0,
    #f8e6e0 25%,
    #f6e6dc 38%,
    #e6e6e4 44%,
    #f5ecc8 50%,
    #d4f2e2 55%,
    #d8f0e0 58%,
    #fadccc 62%,
    #fadccc 70%,
    #f4e8da 74%,
    #f8e6da 90%,
    #e6e8f6 93%,
    #e8e4f4 100%
  );
  color: #1b1b1b;
  font-family: ${winFont};
  font-size: 11px;
  line-height: 16px;
`;

const Weather = styled.button`
  display: flex;
  align-items: center;
  gap: 5px;
  justify-self: start;
  text-align: left;
  small {
    display: block;
    font-size: 11px;
    color: #5a5a5a;
  }
`;

const TaskIcons = styled.div`
  display: flex;
  align-items: center;
  gap: 4px;
`;

const TaskButton = styled.button`
  position: relative;
  display: grid;
  place-items: center;
  width: 40px;
  height: 40px;
  border-radius: 4px;
  background: ${(p) => (p.$active ? "#fdf2ea" : "none")};
  &::after {
    content: "";
    display: ${(p) => (p.$active || p.$running ? "block" : "none")};
    position: absolute;
    bottom: 0;
    left: 50%;
    width: ${(p) => (p.$active ? 16 : 6)}px;
    height: 3px;
    border-radius: 2px;
    transform: translateX(-50%);
    background: ${(p) => (p.$active ? "#0a6cc4" : "#807870")};
  }
`;

const Badge = styled.span`
  position: absolute;
  top: 2px;
  right: -2px;
  padding: 0 4px;
  border-radius: 8px;
  background: #0a6cc4;
  color: #fff;
  font-size: 11px;
  line-height: 16px;
`;

const TaskSearch = styled.div`
  display: flex;
  align-items: center;
  gap: 9px;
  width: 219px;
  height: 32px;
  padding: 0 2px 0 11px;
  border: 1px solid #d8ccc4;
  border-radius: 16px;
  background: #fdf8f4;
  font-size: 13px;
  input {
    flex: 1;
    min-width: 0;
    outline: 0;
  }
  input::placeholder {
    color: #555;
    opacity: 1;
  }
`;

const Tray = styled.div`
  display: flex;
  align-items: center;
  justify-content: flex-end;
  gap: 17px;
`;

const Lang = styled.span`
  text-align: center;
`;

const Status = styled.div`
  display: flex;
  align-items: center;
  gap: 8px;
  margin-right: 2px;
`;

const Clock = styled.span`
  text-align: right;
`;

export default App;
